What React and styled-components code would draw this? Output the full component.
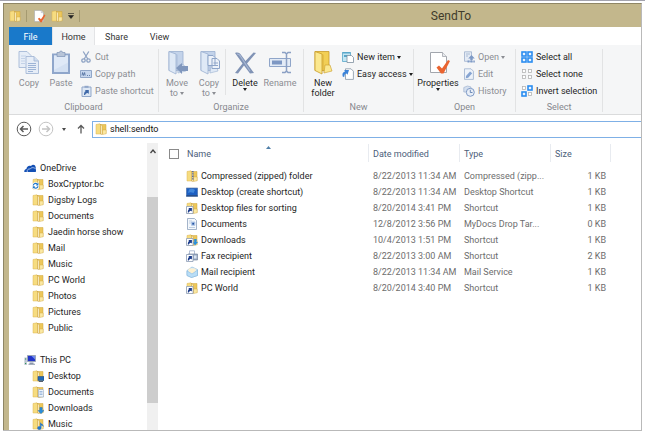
import React from 'react';
import styled, { createGlobalStyle } from 'styled-components';

const GlobalStyle = createGlobalStyle`
  *, *::before, *::after { box-sizing: border-box; }
  body { margin: 0; background: #fff; font: 9px/16px Roboto, "Open Sans", sans-serif; color: #1e1e1e; }
  button, input { font: inherit; color: inherit; margin: 0; padding: 0; border: 0; background: none; }
  ul { list-style: none; margin: 0; padding: 0; }
  svg { display: block; flex: none; }
`;

/* ---------- window shell ---------- */

const Screen = styled.div`
  display: flex;
  flex-direction: column;
  height: 100vh;
  padding: 0 3px 1px 3px;
  border-top: 1px solid #a3a3ae;
  overflow: hidden;
`;

const Window = styled.main`
  flex: 1;
  min-height: 0;
  display: flex;
  flex-direction: column;
  margin-top: 2px;
  border: solid #b9b9b9;
  border-width: 0 1px 1px 0;
  border-top: 1px solid #8f8665;
  background: #c3b78c;
`;

const TitleBar = styled.header`
  height: 23px;
  flex: none;
  display: flex;
  align-items: center;
  padding-left: 5px;
  border-left: 1px solid #8f8665;
`;

const QuickAccess = styled.div`
  display: flex;
  align-items: center;
  gap: 5px;
  width: 84px;
`;

const IconButton = styled.button`
  display: flex;
  align-items: center;
  justify-content: center;
`;

const Divider = styled.span`
  width: 1px;
  height: 12px;
  background: #a59a70;
`;

const Title = styled.h1`
  flex: 1;
  margin: 0;
  padding-left: 168px;
  text-align: center;
  font-size: 12px;
  line-height: 16px;
  font-weight: 400;
  color: #403b2b;
`;

const Client = styled.div`
  flex: 1;
  min-height: 0;
  display: flex;
  flex-direction: column;
  border-left: 1px solid #8f8665;
  padding-left: 5px;
`;

/* ---------- ribbon ---------- */

const Tabs = styled.nav`
  flex: none;
  height: 18px;
  display: flex;
  background: #fff;
`;

const Tab = styled.button`
  width: 43px;
  padding-top: 2px;
  text-align: center;
  color: ${p => (p.$kind === 'file' ? '#fff' : '#333')};
  background: ${p => (p.$kind === 'file' ? '#1979ca' : p.$kind === 'active' ? '#f5f6f7' : 'transparent')};
  border: ${p => (p.$kind === 'active' ? '1px solid #e3e4e6' : '0')};
  border-width: 0 1px;
`;

const Ribbon = styled.div`
  flex: none;
  display: flex;
  height: 70px;
  padding: 4px 0 2px;
  background: #f5f6f7;
  border-bottom: 1px solid #dadbdc;
`;

const Group = styled.section`
  flex: none;
  width: ${p => p.$w}px;
  display: flex;
  flex-direction: column;
  border-right: 1px solid #e2e3e4;
`;

const GroupBody = styled.div`
  flex: 1;
  display: flex;
  justify-content: flex-start;
  padding-left: ${p => p.$inset || 0}px;
`;

const GroupName = styled.h2`
  margin: 0;
  text-align: center;
  font-size: 9px;
  line-height: 10px;
  font-weight: 400;
  color: #85878d;
`;

const BigButton = styled.button`
  width: ${p => p.$w || 32}px;
  display: flex;
  flex-direction: column;
  align-items: center;
  padding-top: 1px;
  line-height: 10px;
  color: ${p => (p.$on ? '#1e1e1e' : '#8b8d93')};
  svg { margin-bottom: 3px; }
`;

const Label = styled.span`
  display: block;
  white-space: nowrap;
`;

const Stack = styled.div`
  display: flex;
  flex-direction: column;
  gap: 1px;
  padding-left: ${p => p.$inset || 0}px;
`;

const SmallButton = styled.button`
  display: flex;
  align-items: center;
  gap: 3px;
  height: 16px;
  white-space: nowrap;
  color: ${p => (p.$on ? '#1e1e1e' : '#8b8d93')};
`;

const InnerRule = styled.span`
  width: 1px;
  height: 46px;
  background: #e2e3e4;
`;

const Caret = styled.i`
  display: inline-block;
  border: solid transparent;
  border-width: 3px 2px 0;
  border-top-color: currentColor;
  vertical-align: middle;
`;

/* ---------- address bar ---------- */

const AddressRow = styled.form`
  flex: none;
  display: grid;
  grid-template-columns: 22px 22px 17px 15px 1fr;
  align-items: center;
  height: 28px;
  padding-left: 7px;
  background: #fff;
  color: #4a4a4a;
`;

const NavButton = styled.button`
  display: flex;
  align-items: center;
  height: 18px;
  padding-left: ${p => p.$inset || 0}px;
`;

const AddressBox = styled.label`
  display: flex;
  align-items: center;
  height: 17px;
  padding-left: 2px;
  gap: 3px;
  border: 1px solid #7fb0e6;
  border-right: 0;
`;

const AddressInput = styled.input`
  flex: 1;
  min-width: 0;
  height: 15px;
  color: #111;
  outline: 0;
`;

/* ---------- body ---------- */

const Body = styled.div`
  flex: 1;
  min-height: 0;
  display: flex;
  background: #fff;
`;

const Tree = styled.aside`
  flex: none;
  width: 138px;
  overflow: hidden;
  padding: 17px 0 0 15px;
`;

const TreeSection = styled.ul`
  margin-bottom: 16px;
`;

const TreeItem = styled.li`
  padding-left: ${p => (p.$child ? 8 : 0)}px;
`;

const TreeLink = styled.a`
  display: flex;
  align-items: center;
  gap: 4px;
  height: 16px;
  color: inherit;
  text-decoration: none;
  white-space: nowrap;
`;

const ScrollBar = styled.div`
  flex: none;
  width: 11px;
  display: flex;
  flex-direction: column;
  background: #f0f0f0;
`;

const ScrollUp = styled.button`
  flex: none;
  height: 16px;
  display: flex;
  align-items: center;
  justify-content: center;
`;

const ScrollTrack = styled.div`
  flex: 1;
  display: grid;
  grid-template-rows: 14fr 76fr 10fr;
`;

const ScrollThumb = styled.span`
  grid-row: 2;
  background: #cdcdcd;
`;

const Files = styled.div`
  flex: 1;
  min-width: 0;
  overflow: hidden;
  padding-left: 11px;
`;

const FileTable = styled.table`
  width: 100%;
  table-layout: fixed;
  border-collapse: collapse;
  th, td { padding: 0; font-weight: 400; text-align: left; height: 16px; }
`;

const Column = styled.col`
  width: ${p => (p.$w ? `${p.$w}px` : 'auto')};
`;

const HeadCell = styled.th`
  && { height: 25px; padding: 0 0 4px ${p => (p.$first ? 0 : 4)}px; }
  color: #4c607a;
  background: ${p => (p.$plain ? 'none' : 'linear-gradient(#e8ebf0, #e8ebf0) right 0 top 1px / 1px 18px no-repeat')};
`;

const NameHead = styled.div`
  display: grid;
  grid-template-columns: 18px 79px 1fr;
  align-items: center;
`;

const CheckBox = styled.input`
  appearance: none;
  width: 10px;
  height: 10px;
  border: 1px solid #8a8a8a;
  background: #fff;
`;

const SortMark = styled.span`
  align-self: start;
`;

const FileName = styled.div`
  display: flex;
  align-items: center;
  gap: 3px;
  padding-left: 17px;
  white-space: nowrap;
`;

const Cell = styled.td`
  && { padding-left: 4px; text-align: ${p => (p.$right ? 'right' : 'left')}; padding-right: ${p => (p.$right ? 5 : 0)}px; }
  color: #6d6d6d;
  white-space: nowrap;
`;

/* ---------- icons ---------- */

const FolderShape = () => (
  <>
    <path d="M5 1.500h6v9H5z" fill="#edc75a" stroke="#cfa43c" strokeWidth=".5" />
    <path d="M1 1.500 5 .8l.8 1.400V11H1z" fill="#f6dc80" stroke="#dcb550" strokeWidth=".5" />
    <path d="M5.500 1 7.200 3v8.600L5.500 11z" fill="#fff6cf" stroke="#c3952f" strokeWidth=".5" />
    <path d="M7.600 7h3.600v3.800l-3.600.7z" fill="#fbe9a4" stroke="#cfa43c" strokeWidth=".4" />
  </>
);

const ShortcutMark = () => (
  <>
    <path d="M.5 4.500h6.500v7H.5z" fill="#fff" stroke="#8d9db5" strokeWidth=".8" />
    <path d="M1.800 10.500c0-2 .4-3 1.400-3.600L2.300 6h3.600v3.600l-.9-.9c-1.300.4-2 .8-2.200 1.800z" fill="#1d3d8c" />
  </>
);

const Small = ({ type, size = 12 }) => (
  <svg width={size} height={size} viewBox="0 0 12 12" aria-hidden="true">
    {smallArt[type]}
  </svg>
);

const smallArt = {
  folder: <FolderShape />,
  sync: (
    <>
      <FolderShape />
      <circle cx="3.600" cy="7.800" r="3.600" fill="#fff" />
      <path d="M.6 7.400a3 3 0 0 1 5-1.800l.8-.8v2.600H4l.8-.9a2 2 0 0 0-3 .9zM6.600 8.200a3 3 0 0 1-5 1.800l-.8.8V8.200h2.400l-.8.9a2 2 0 0 0 3-.9z" fill="#1f76c9" />
    </>
  ),
  folderDesktop: (
    <>
      <FolderShape />
      <path d="M6 6.500h6v4H6z" fill="#2368b6" stroke="#16457f" strokeWidth=".5" />
      <path d="M7 11.500h4" stroke="#59616d" />
    </>
  ),
  folderDocs: (
    <>
      <FolderShape />
      <path d="M6.500 3.500H11l.7.7v6.800H6.500z" fill="#eef4fb" stroke="#8fa3bf" strokeWidth=".6" />
      <path d="M7.500 5.500h3M7.500 7h3M7.500 8.500h3" stroke="#6b93c9" strokeWidth=".6" />
    </>
  ),
  folderDown: (
    <>
      <FolderShape />
      <path d="M7.800 5.500h2.400v3H12l-3 3.200-3-3.200h1.800z" fill="#2a8fdc" stroke="#1666ac" strokeWidth=".4" />
    </>
  ),
  folderMusic: (
    <>
      <FolderShape />
      <path d="M8.200 4c.4 1.800 3.800 2 3.200 5-.4-1-1.200-1.600-2-1.800v2.900a2 1.700 0 1 1-1.200-1.600z" fill="#1d74cf" />
    </>
  ),
  cloud: (
    <>
      <path d="M.3 10C.1 8 1.200 7 2.400 7 2.600 4.500 4.800 3 7 4 8.200 2.200 11.300 2.400 11.600 5c.5 1.800.5 3.400.2 5z" fill="#1450b4" />
      <path d="M3.300 10C2.800 7.800 4.200 6.600 6.200 7 7.600 5 10 5.400 11.800 7" fill="none" stroke="#dfeaff" strokeWidth=".7" />
    </>
  ),
  pc: (
    <>
      <path d="M3.500 1.500h8v6h-8z" fill="#2234c8" stroke="#9aa4b8" />
      <path d="M7.500 2h3.500v3.500z" fill="#6f8bf0" />
      <path d="M5.500 8.500h4v1.200h1.500v1H4.500v-1h1z" fill="#8b97ab" />
      <path d="M.4 3.500h2.400v7.500H.4z" fill="#b9c3cf" />
      <path d="M1 5h1.200M1 9.500h1.200" stroke="#32965a" />
    </>
  ),
  zip: (
    <>
      <FolderShape />
      <path d="M6.800 1v9" stroke="#5c6fa0" strokeWidth="1.600" strokeDasharray="1 .7" />
    </>
  ),
  desktop: (
    <>
      <path d="M.3 2h11.400v8.500H.3z" fill="#1c5fc2" stroke="#5f7da8" strokeWidth=".7" />
      <path d="M3 3.500c2-1 4-1 6 .5L7.500 7C5.500 6 3.500 6 2 7z" fill="#4188dc" />
      <path d="M.5 9.200h11v1H.5z" fill="#2b4a7c" />
    </>
  ),
  shortcut: (
    <>
      <FolderShape />
      <ShortcutMark />
    </>
  ),
  doc: (
    <>
      <path d="M1.500.500h7L10.500 2.500v9h-9z" fill="#f4f8fc" stroke="#8ea2bd" strokeWidth=".8" />
      <path d="M3 3h3M3 5h2M3 9.500h6" stroke="#a9bdd6" strokeWidth=".7" />
      <path d="M5.500 4h3.400v3.400H5.500z" fill="#dbe8f8" stroke="#7fa3d6" strokeWidth=".5" />
      <path d="M6.200 4.700h2v2h-2z" fill="#2454a4" />
    </>
  ),
  downShortcut: (
    <>
      <FolderShape />
      <path d="M8.200 5h2.400v3H12l-3 3.500L6.800 8.200h1.400z" fill="#2a8fdc" />
      <ShortcutMark />
    </>
  ),
  fax: (
    <>
      <path d="M3.500.8h5v4h-5z" fill="#fff" stroke="#93a6c4" strokeWidth=".7" />
      <path d="M2 4h9.500v6H2z" fill="#9cabc2" stroke="#6a7a96" strokeWidth=".6" />
      <path d="M8 5.500h2.500v3H8z" fill="#d9e4f2" />
      <ShortcutMark />
    </>
  ),
  mail: (
    <>
      <path d="M1 4.500 6 1l5.500 2.500v6l-6 2L1 9.500z" fill="#dbeefb" stroke="#7fb2d8" strokeWidth=".6" />
      <path d="M2.500 2.500h7v3l-3.500 2-3.500-2z" fill="#fdf0cf" />
      <path d="M1 4.800 6 8l5.500-4v5.500l-6 2L1 9.500z" fill="#b9ddf6" stroke="#7fb2d8" strokeWidth=".5" />
    </>
  ),
  cut: (
    <g fill="none" stroke="#8ea3c4" strokeWidth="1.300">
      <path d="M3.200.5 7.800 8M8.800.5 4.200 8" />
      <circle cx="3.500" cy="9.500" r="1.700" />
      <circle cx="8.500" cy="9.500" r="1.700" />
    </g>
  ),
  path: (
    <>
      <path d="M.5 2.500h11v7H.5z" fill="#c7d7ee" stroke="#7e97bd" strokeWidth=".8" />
      <path d="m2 7.500.6-3 1 3 1-3 .6 3M7 7.500h1M9 7.500h1" fill="none" stroke="#4d6c9c" strokeWidth=".8" />
    </>
  ),
  pasteShortcut: (
    <>
      <path d="M2 2h9v9.500H2z" fill="#dde7f4" stroke="#91a7c9" />
      <path d="M4.500.8h4v2h-4z" fill="#91a7c9" />
      <path d="M4 10c0-2.500.6-3.500 1.800-4l-1-1h4v4l-1-1C6 8.400 5.300 8.800 5.200 10z" fill="#3f68a8" />
    </>
  ),
  newItem: (
    <>
      <path d="M.5 1.500h8v9h-8z" fill="#c3e6f3" stroke="#58a6c9" strokeWidth=".8" />
      <path d="M.5 1h8v1.500h-8z" fill="#58a6c9" />
      <path d="M2 4h3v2H2z" fill="#58a6c9" />
      <path d="M5 4.500h4.500l2 2v5H5z" fill="#fff" stroke="#7f8fa0" strokeWidth=".8" />
    </>
  ),
  easy: (
    <>
      <path d="M3.500.8h5.500l2.400 2.400v8.200H3.500z" fill="#fff" stroke="#8795a5" strokeWidth=".8" />
      <path d="M1 9c-1.200-2.500-.4-5 2-5.500L2.200 2H7L5.500 6.800l-1-1.300C2.800 5.800 2.200 7 2.600 8.500z" fill="#3c83d8" />
    </>
  ),
  open: (
    <>
      <path d="M1.500.8h7v9.500h-7z" fill="#e4ebf5" stroke="#9db0cd" strokeWidth=".8" />
      <path d="M3 3h4M3 5h2" stroke="#9db0cd" strokeWidth=".8" />
      <path d="m8.500 4 3.300 3.500H9.700v2H7.300v-2H5.200zM4.500 9.500h2v2h-2zM7.300 10h2.400v1.500H7.300zM10.300 9.500h1.500v2h-1.500z" fill="#7e9ac6" />
    </>
  ),
  edit: (
    <>
      <path d="M1.500.8h6.500l2.400 2.400v8.200H1.500z" fill="#eef3fa" stroke="#9db0cd" strokeWidth=".8" />
      <path d="m3 8 4-4.500 2.200 1.800-4 4.500-2.400.5z" fill="#86a4d2" />
    </>
  ),
  history: (
    <>
      <path d="M.8 2.500 4.500 1 8 2v5H.8z" fill="#d5e0ef" stroke="#a0b3d0" strokeWidth=".7" />
      <circle cx="7.300" cy="7.300" r="4" fill="#e8eef7" stroke="#7e9ac6" />
      <path d="M7.300 4.800v2.700h2.200" fill="none" stroke="#5f7fb0" strokeWidth=".9" />
    </>
  ),
};

const Squares = ({ on }) => (
  <svg width="12" height="12" viewBox="0 0 12 12" aria-hidden="true">
    {[[1, 1], [7, 1], [1, 7], [7, 7]].map(([x, y], i) =>
      on[i] ? (
        <rect key={i} x={x} y={y} width="4" height="4" fill="#e9f4ff" stroke="#2a8df0" strokeWidth="1.600" />
      ) : (
        <rect key={i} x={x + 0.5} y={y + 0.5} width="3" height="3" fill="#fff" stroke="#b3b3b3" strokeWidth=".8" />
      )
    )}
  </svg>
);

const BigFolder = ({ tone, children }) => {
  const c = tone === 'gold' ? ['#fbe88f', '#f2cf55', '#c99c28'] : ['#dfe9f6', '#c3d3ea', '#9ab0d0'];
  return (
    <svg width="24" height="25" viewBox="0 0 24 25" aria-hidden="true">
      <path d="M4 1.500h14v19H4z" fill={c[1]} stroke={c[2]} strokeWidth=".8" />
      <path d="M4 1.500 11 4v20L4 20.500z" fill={c[0]} stroke={c[2]} strokeWidth=".8" />
      <path d="M11.500 4v19.500L13 22V5z" fill={c[2]} opacity=".3" />
      <path d="M14 15h5l2 6-8 2z" fill={c[0]} stroke={c[2]} strokeWidth=".6" />
      {children}
    </svg>
  );
};

const CopyArt = () => (
  <svg width="24" height="25" viewBox="0 0 24 25" aria-hidden="true">
    <g fill="#e6edf7" stroke="#a6b9d6" strokeWidth=".9">
      <path d="M2 1.500h8l4 4v12H2z" />
      <path d="M9 6.500h8l4.500 4.500v12.500H9z" />
      <path d="M17 6.500V11h4.500" fill="#cfdcee" />
    </g>
    <path d="M4 6h5M4 8.500h4M4 11h4M4 13.500h4" stroke="#c3d2e8" />
    <path d="M11 13.500h8M11 15.500h8M11 17.500h8M11 19.500h8M11 21.500h5" stroke="#9db4d6" />
  </svg>
);

const PasteArt = () => (
  <svg width="24" height="25" viewBox="0 0 24 25" aria-hidden="true">
    <path d="M3 3.500h18v20.500H3z" fill="#8fa6cb" />
    <path d="M5 5.500h14V22H5z" fill="#d3e0f2" />
    <path d="M5 5.500h14v7L5 20z" fill="#dfe9f7" />
    <path d="M8 2.500h2.500a1.500 1.500 0 0 1 3 0H16v4H8z" fill="#b7c4d8" stroke="#7c92b6" strokeWidth=".7" />
  </svg>
);

const DeleteArt = () => (
  <svg width="24" height="25" viewBox="0 0 24 25" aria-hidden="true">
    <path d="M2 3c3-1 5 0 6.500 2.500l4 5.500 8-8.500 2.500.5-9 10.500 7 9.500-4 .5-6-8L5 23.500 2 23l7.500-9.500z" fill="#8093b5" />
    <path d="M4 4c2 0 3 1 4 3l9 14" fill="none" stroke="#a5b6d3" strokeWidth="1.200" />
  </svg>
);

const RenameArt = () => (
  <svg width="24" height="25" viewBox="0 0 24 25" aria-hidden="true">
    <path d="M1.500 8.500h21v8h-21z" fill="#e3ebf6" stroke="#8fa5c9" />
    <path d="M4 10.500h10v4H4z" fill="#7d97c3" />
    <path d="M14 2.500h3l1.500 1.500L20 2.500h3M14 22.500h3l1.500-1.500 1.500 1.500h3M18.500 4v17" fill="none" stroke="#8ba0c4" strokeWidth="1.500" />
  </svg>
);

const PropertiesArt = ({ size = 25 }) => (
  <svg width={size} height={size} viewBox="0 0 24 25" aria-hidden="true">
    <path d="M4 2.500h12L20 6.500v16H4z" fill="#fff" stroke="#a2a6ad" />
    <path d="M16 2.500v4h4" fill="#e8eaee" stroke="#a2a6ad" strokeWidth=".8" />
    <path d="m10 17.500 2.500-2 3 3L21.500 10l2 1-6.500 12.500h-2.500z" fill="#ea6430" />
  </svg>
);

const Arrow = ({ muted, flip }) => (
  <svg width="16" height="16" viewBox="0 0 16 16" aria-hidden="true">
    <g fill="none" stroke={muted ? '#c4c4c4' : '#5a5a5a'}>
      <circle cx="8" cy="8" r="6.800" strokeWidth="1" />
      <path d={flip ? 'M4 8h7.500M8.500 5l3 3-3 3' : 'M12 8H4.500M7.500 5l-3 3 3 3'} strokeWidth="1.500" />
    </g>
  </svg>
);

/* ---------- data ---------- */

const oneDrive = [
  ['BoxCryptor.bc', 'sync'], ['Digsby Logs', 'folder'], ['Documents', 'folder'], ['Jaedin horse show', 'folder'],
  ['Mail', 'folder'], ['Music', 'folder'], ['PC World', 'folder'], ['Photos', 'folder'], ['Pictures', 'folder'], ['Public', 'folder'],
];
const thisPc = [['Desktop', 'folderDesktop'], ['Documents', 'folderDocs'], ['Downloads', 'folderDown'], ['Music', 'folderMusic']];

const files = [
  ['Compressed (zipped) folder', 'zip', '8/22/2013 11:34 AM', 'Compressed (zipp...', '1 KB'],
  ['Desktop (create shortcut)', 'desktop', '8/22/2013 11:34 AM', 'Desktop Shortcut', '1 KB'],
  ['Desktop files for sorting', 'shortcut', '8/20/2014 3:41 PM', 'Shortcut', '1 KB'],
  ['Documents', 'doc', '12/8/2012 3:56 PM', 'MyDocs Drop Tar...', '0 KB'],
  ['Downloads', 'downShortcut', '10/4/2013 1:51 PM', 'Shortcut', '1 KB'],
  ['Fax recipient', 'fax', '8/22/2013 3:00 AM', 'Shortcut', '2 KB'],
  ['Mail recipient', 'mail', '8/22/2013 11:34 AM', 'Mail Service', '1 KB'],
  ['PC World', 'shortcut', '8/20/2014 3:40 PM', 'Shortcut', '1 KB'],
];

const Branch = ({ name, icon, items }) => (
  <TreeSection>
    <TreeItem><TreeLink href="#"><Small type={icon} />{name}</TreeLink></TreeItem>
    {items.map(([label, art]) => (
      <TreeItem key={label} $child><TreeLink href="#"><Small type={art} />{label}</TreeLink></TreeItem>
    ))}
  </TreeSection>
);

export default function App() {
  return (
    <Screen>
      <GlobalStyle />
      <Window>
        <TitleBar>
          <QuickAccess>
            <Small type="folder" />
            <Divider />
            <IconButton aria-label="Properties"><PropertiesArt size={14} /></IconButton>
            <IconButton aria-label="New folder"><Small type="folder" /></IconButton>
            <IconButton aria-label="Customize toolbar">
              <svg width="6" height="6" viewBox="0 0 6 6"><path d="M0 .5h6M.5 2.500h5L3 5.500z" fill="#222" stroke="#222" strokeWidth=".6" /></svg>
            </IconButton>
            <Divider />
          </QuickAccess>
          <Title>SendTo</Title>
        </TitleBar>
        <Client>
          <Tabs>
            <Tab $kind="file">File</Tab>
            <Tab $kind="active">Home</Tab>
            <Tab>Share</Tab>
            <Tab>View</Tab>
          </Tabs>
          <Ribbon>
            <Group $w={150}>
              <GroupBody $inset={4}>
                <BigButton><CopyArt /><Label>Copy</Label></BigButton>
                <BigButton><PasteArt /><Label>Paste</Label></BigButton>
                <Stack $inset={3}>
                  <SmallButton><Small type="cut" />Cut</SmallButton>
                  <SmallButton><Small type="path" />Copy path</SmallButton>
                  <SmallButton><Small type="pasteShortcut" />Paste shortcut</SmallButton>
                </Stack>
              </GroupBody>
              <GroupName>Clipboard</GroupName>
            </Group>
            <Group $w={145}>
              <GroupBody $inset={2}>
                <BigButton>
                  <BigFolder><path d="m11 18 6-5v3h6v5h-6v3z" fill="#8097bd" /></BigFolder>
                  <Label>Move</Label><Label>to <Caret /></Label>
                </BigButton>
                <BigButton>
                  <BigFolder><path d="M11 5.500h5l2 2v8h-7zM15 8.500h5l2.500 2.500v7.500H15z" fill="#edf2f9" stroke="#8ea5c9" /><path d="M16.500 13h4.500M16.500 15.500h4.500" stroke="#8ea5c9" /></BigFolder>
                  <Label>Copy</Label><Label>to <Caret /></Label>
                </BigButton>
                <InnerRule />
                <BigButton $on $w={38}><DeleteArt /><Label>Delete</Label><Caret /></BigButton>
                <BigButton><RenameArt /><Label>Rename</Label></BigButton>
              </GroupBody>
              <GroupName>Organize</GroupName>
            </Group>
            <Group $w={110}>
              <GroupBody $inset={3}>
                <BigButton $on><BigFolder tone="gold" /><Label>New</Label><Label>folder</Label></BigButton>
                <Stack $inset={3}>
                  <SmallButton $on><Small type="newItem" /><Label>New item <Caret /></Label></SmallButton>
                  <SmallButton $on><Small type="easy" /><Label>Easy access <Caret /></Label></SmallButton>
                </Stack>
              </GroupBody>
              <GroupName>New</GroupName>
            </Group>
            <Group $w={102}>
              <GroupBody $inset={2}>
                <BigButton $on $w={44}><PropertiesArt /><Label>Properties</Label><Caret /></BigButton>
                <Stack $inset={3}>
                  <SmallButton><Small type="open" /><Label>Open <Caret /></Label></SmallButton>
                  <SmallButton><Small type="edit" />Edit</SmallButton>
                  <SmallButton><Small type="history" />History</SmallButton>
                </Stack>
              </GroupBody>
              <GroupName>Open</GroupName>
            </Group>
            <Group $w={87}>
              <GroupBody $inset={5}>
                <Stack>
                  <SmallButton $on><Squares on={[1, 1, 1, 1]} />Select all</SmallButton>
                  <SmallButton $on><Squares on={[0, 0, 0, 0]} />Select none</SmallButton>
                  <SmallButton $on><Squares on={[0, 1, 1, 0]} />Invert selection</SmallButton>
                </Stack>
              </GroupBody>
              <GroupName>Select</GroupName>
            </Group>
          </Ribbon>
          <AddressRow onSubmit={e => e.preventDefault()}>
            <NavButton type="button" aria-label="Back"><Arrow /></NavButton>
            <NavButton type="button" aria-label="Forward"><Arrow muted flip /></NavButton>
            <NavButton type="button" aria-label="Recent locations" $inset={2}><Caret /></NavButton>
            <NavButton type="button" aria-label="Up">
              <svg width="8" height="10" viewBox="0 0 8 10"><path d="M4 9.500V1.500M1 4.500l3-3 3 3" fill="none" stroke="#5a5a5a" strokeWidth="1.300" /></svg>
            </NavButton>
            <AddressBox>
              <Small type="folder" />
              <AddressInput aria-label="Address" defaultValue="shell:sendto" />
            </AddressBox>
          </AddressRow>
          <Body>
            <Tree>
              <Branch name="OneDrive" icon="cloud" items={oneDrive} />
              <Branch name="This PC" icon="pc" items={thisPc} />
            </Tree>
            <ScrollBar>
              <ScrollUp aria-label="Scroll up">
                <svg width="6" height="5" viewBox="0 0 6 5"><path d="m.5 4 2.500-3 2.500 3" fill="none" stroke="#444" strokeWidth="1.300" /></svg>
              </ScrollUp>
              <ScrollTrack><ScrollThumb /></ScrollTrack>
            </ScrollBar>
            <Files>
              <FileTable>
                <colgroup>
                  <Column $w={200} /><Column $w={91} /><Column $w={91} /><Column $w={60} /><Column />
                </colgroup>
                <thead>
                  <tr>
                    <HeadCell $first>
                      <NameHead>
                        <CheckBox type="checkbox" aria-label="Select all files" />
                        <Label>Name</Label>
                        <SortMark><svg width="5" height="3" viewBox="0 0 5 3"><path d="M0 3 2.500 0 5 3z" fill="#4f7fa8" /></svg></SortMark>
                      </NameHead>
                    </HeadCell>
                    <HeadCell>Date modified</HeadCell>
                    <HeadCell>Type</HeadCell>
                    <HeadCell>Size</HeadCell>
                    <HeadCell $plain />
                  </tr>
                </thead>
                <tbody>
                  {files.map(([name, icon, date, type, size]) => (
                    <tr key={name}>
                      <td><FileName><Small type={icon} />{name}</FileName></td>
                      <Cell>{date}</Cell>
                      <Cell>{type}</Cell>
                      <Cell $right>{size}</Cell>
                      <td />
                    </tr>
                  ))}
                </tbody>
              </FileTable>
            </Files>
          </Body>
        </Client>
      </Window>
    </Screen>
  );
}
